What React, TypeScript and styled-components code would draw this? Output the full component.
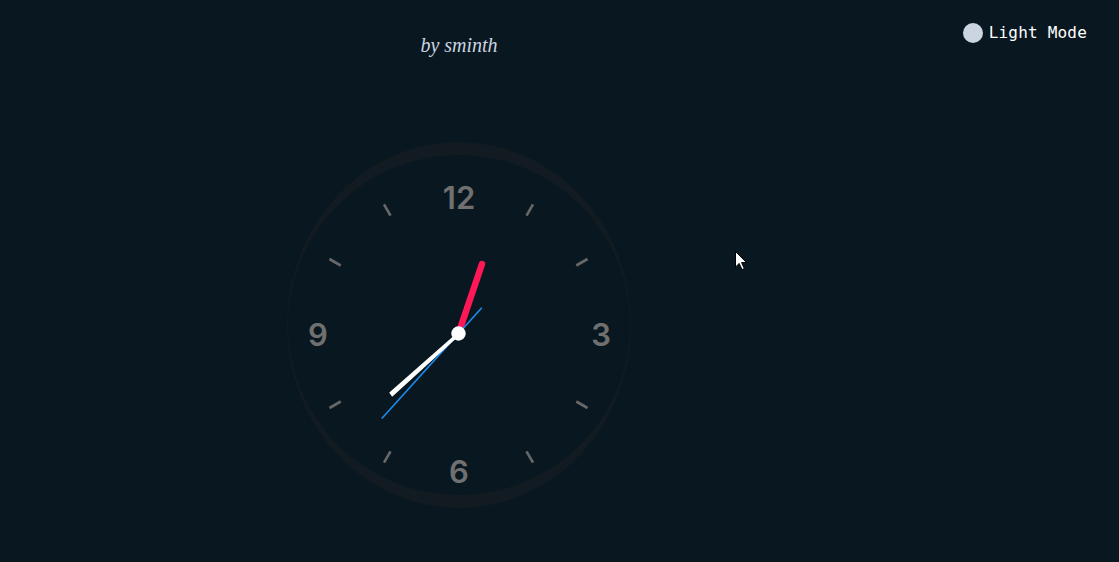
import React from 'react';
import styled, { createGlobalStyle } from 'styled-components';

const GlobalStyle = createGlobalStyle`
  html, body {
    margin: 0;
    padding: 0;
    background: #091820;
  }
  #root {
    min-height: 100vh;
  }
`;

const Page = styled.div`
  position: relative;
  min-height: 100vh;
  display: grid;
  grid-template-columns: 918px 1fr;
  background: #091820;
  overflow: hidden;
`;

const Main = styled.main`
  display: flex;
  flex-direction: column;
  align-items: center;
  padding-top: 34px;
`;

const Credit = styled.h1`
  margin: 0;
  font-family: 'Liberation Serif', 'Times New Roman', serif;
  font-style: italic;
  font-weight: 400;
  font-size: 20px;
  line-height: 23px;
  color: #cbd5e1;
`;

const Side = styled.aside`
  display: flex;
  justify-content: flex-end;
  align-items: flex-start;
  padding: 23px 32px 0 0;
`;

const ThemeToggle = styled.button`
  display: flex;
  align-items: center;
  gap: 6px;
  padding: 0;
  border: none;
  background: transparent;
  cursor: pointer;
  font-family: 'DejaVu Sans Mono', 'Liberation Mono', monospace;
  font-size: 16px;
  letter-spacing: 0.2px;
  line-height: 20px;
  color: #ffffff;
`;

const ToggleDot = styled.span`
  width: 20px;
  height: 20px;
  border-radius: 50%;
  background: #cbd5e1;
`;

const Dial = styled.div`
  margin-top: 85px;
  width: 342px;
  height: 340px;
  border-style: solid;
  border-width: 13px 1px;
  border-color: #111b21;
  border-radius: 50%;
`;

const Face = styled.svg`
  display: block;
  width: 340px;
  height: 340px;
  margin-left: 1px;
  overflow: visible;
`;

const Numeral = styled.text`
  font-family: Inter, 'Open Sans', sans-serif;
  font-weight: 600;
  font-size: 31px;
  fill: #707070;
`;

const Pointer = styled.svg`
  position: absolute;
  left: 735px;
  top: 251px;
  width: 13px;
  height: 20px;
`;

const CX = 169.5;
const CY = 178.5;

const ticks = [30, 60, 120, 150, 210, 240, 300, 330].map((deg) => {
  const a = (deg * Math.PI) / 180;
  const r1 = 136;
  const r2 = 149;
  return {
    x1: CX + Math.sin(a) * r1,
    y1: CY - Math.cos(a) * r1,
    x2: CX + Math.sin(a) * r2,
    y2: CY - Math.cos(a) * r2,
  };
});

const numerals = [
  { label: '12', x: 170, y: 42 },
  { label: '3', x: 312, y: 179 },
  { label: '6', x: 170, y: 316 },
  { label: '9', x: 29, y: 179 },
];

const Clock: React.FC = () => (
  <Dial>
    <Face viewBox="0 0 340 340">
      {ticks.map((t, i) => (
        <line key={i} {...t} stroke="#686868" strokeWidth={2.6} />
      ))}
      {numerals.map((n) => (
        <Numeral key={n.label} x={n.x} y={n.y} textAnchor="middle" dominantBaseline="central">
          {n.label}
        </Numeral>
      ))}
      {/* hour */}
      <line x1={CX} y1={CY} x2={CX + 23.5} y2={CY - 69.5} stroke="#ff1757" strokeWidth={6.5} strokeLinecap="round" />
      {/* second */}
      <line x1={CX + 23.3} y1={CY - 25.7} x2={CX - 76.7} y2={CY + 85} stroke="#1c8cf0" strokeWidth={1.6} />
      {/* minute, a little wider towards the tip */}
      <path
        d={`M ${CX} ${CY - 1} L ${CX - 68.5} ${CY + 59.2} L ${CX - 66.2} ${CY + 62.4} L ${CX + 1} ${CY + 1} Z`}
        fill="#ffffff"
        stroke="#ffffff"
        strokeWidth={1.2}
        strokeLinejoin="round"
      />
      <circle cx={CX} cy={CY} r={7.2} fill="#ffffff" />
    </Face>
  </Dial>
);

export default function App() {
  return (
    <>
      <GlobalStyle />
      <Page>
        <Main>
          <Credit>by sminth</Credit>
          <Clock />
        </Main>
        <Side>
          <ThemeToggle>
            <ToggleDot />
            Light Mode
          </ThemeToggle>
        </Side>
        <Pointer viewBox="0 0 13 20">
          <path d="M0.5 0.5 L0.5 16 L4.2 12.4 L7 18.6 L9.3 17.6 L6.6 11.6 L11.5 11.6 Z" fill="#ffffff" stroke="#000000" strokeWidth={1} />
        </Pointer>
      </Page>
    </>
  );
}
